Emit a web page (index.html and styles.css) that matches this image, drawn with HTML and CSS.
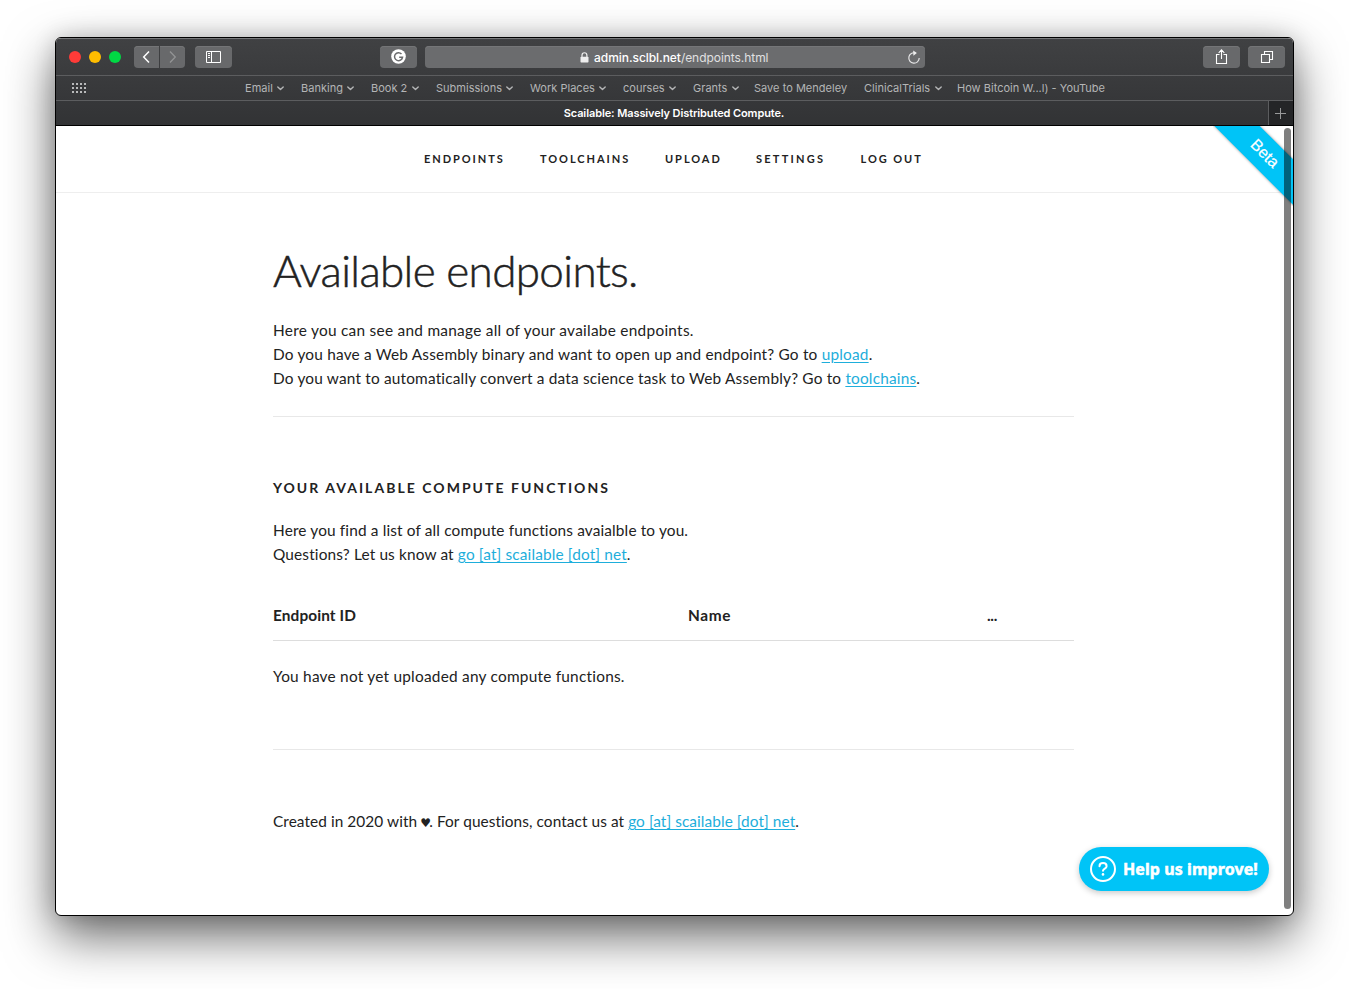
FILE: index.html
```html
<!DOCTYPE html>
<html lang="en">
<head>
<meta charset="utf-8">
<title>Scailable: Massively Distributed Compute.</title>
<link rel="stylesheet" href="styles.css">
</head>
<body>
<svg class="defs" width="0" height="0"><defs><symbol id="chev" viewBox="0 0 7 5"><path d="M.8 1l2.7 2.6L6.2 1" fill="none" stroke="#b4b5b6" stroke-width="1.4" stroke-linecap="round" stroke-linejoin="round"/></symbol></defs></svg>
<div class="window">
  <header class="chrome">
    <div class="toolbar">
      <div class="lights"><i class="red"></i><i class="yellow"></i><i class="green"></i></div>
      <div class="btn back"><svg width="25" height="22" viewBox="0 0 25 22"><path d="M15 5.5L9.700 11l5.300 5.500" fill="none" stroke="#fff" stroke-width="1.500"/></svg></div>
      <div class="btn forward"><svg width="25" height="22" viewBox="0 0 25 22"><path d="M10 5.500l5.300 5.500L10 16.500" fill="none" stroke="#939495" stroke-width="1.300"/></svg></div>
      <div class="btn side"><svg width="37" height="22" viewBox="0 0 37 22"><path d="M11.500 5.500h14v11h-14zM16.500 5.500v11M13 7.500h2M13 9.500h2M13 11.500h2" fill="none" stroke="#fff"/></svg></div>
      <div class="btn gram"><svg width="37" height="22" viewBox="0 0 37 22"><circle cx="18.500" cy="10.500" r="7.300" fill="#fff"/><path d="M21.500 8A4 4 0 1 0 22.500 11.300H19.200" fill="none" stroke="#6a6b6d" stroke-width="1.500"/></svg></div>
      <div class="address">
        <svg class="lock" width="9" height="11" viewBox="0 0 9 11"><path d="M2 5V3.200a2.400 2.400 0 0 1 4.900 0V5" fill="none" stroke="#eee" stroke-width="1.200"/><rect x=".5" y="4.700" width="8" height="5.800" rx=".7" fill="#eee"/></svg>
        <span class="url"><b>admin.sclbl.net</b>/endpoints.html</span>
        <svg class="reload" width="14" height="15" viewBox="0 0 14 15"><path d="M8.500 3A5.200 5.200 0 1 0 12.200 8" fill="none" stroke="#e4e4e5" stroke-width="1.200"/><path d="M6.200 .5L9.900 3.100 6.400 5.700z" fill="#eee"/></svg>
      </div>
      <div class="btn share"><svg width="37" height="22" viewBox="0 0 37 22"><path d="M16.500 8.500h-3v9h10v-9h-3M18.500 13V4M15.700 6.800l2.800-2.900 2.800 2.900" fill="none" stroke="#fff" stroke-width="1.100"/></svg></div>
      <div class="btn tabs"><svg width="37" height="22" viewBox="0 0 37 22"><path d="M13.500 8.500h8v8h-8zM16.500 8V5.500h8v8H22" fill="none" stroke="#fff" stroke-width="1.100"/></svg></div>
    </div>
    <nav class="bookmarks">
      <svg class="dots" width="16" height="10" viewBox="0 0 16 10"><path d="M0 1h15M0 5h15M0 9h15" fill="none" stroke="#b9babb" stroke-width="2" stroke-dasharray="2 2"/></svg>
      <span class="bm w-email">Email<svg width="7" height="5"><use href="#chev"/></svg></span>
      <span class="bm w-banking">Banking<svg width="7" height="5"><use href="#chev"/></svg></span>
      <span class="bm w-book">Book 2<svg width="7" height="5"><use href="#chev"/></svg></span>
      <span class="bm w-sub">Submissions<svg width="7" height="5"><use href="#chev"/></svg></span>
      <span class="bm w-work">Work Places<svg width="7" height="5"><use href="#chev"/></svg></span>
      <span class="bm w-courses">courses<svg width="7" height="5"><use href="#chev"/></svg></span>
      <span class="bm w-grants">Grants<svg width="7" height="5"><use href="#chev"/></svg></span>
      <span class="bm w-save">Save to Mendeley</span>
      <span class="bm w-trials">ClinicalTrials<svg width="7" height="5"><use href="#chev"/></svg></span>
      <span class="bm">How Bitcoin W...l) - YouTube</span>
    </nav>
    <div class="tabbar"><div class="tab">Scailable: Massively Distributed Compute.</div><div class="plus"><svg width="11" height="11" viewBox="0 0 11 11"><path d="M5.500 0v11M0 5.500h11" stroke="#98999a"/></svg></div></div>
  </header>
  <div class="page">
    <nav class="menu">
      <a class="m1">ENDPOINTS</a><a class="m2">TOOLCHAINS</a><a class="m3">UPLOAD</a><a class="m4">SETTINGS</a><a class="m5">LOG OUT</a>
    </nav>
    <main class="content">
      <h1>Available endpoints.</h1>
      <p class="intro"><span class="t1">Here you can see and manage all of your availabe endpoints.</span><br><span class="t2">Do you have a Web Assembly binary and want to open up and endpoint? Go to <a>upload</a>.</span><br><span class="t3">Do you want to automatically convert a data science task to Web Assembly? Go to <a>toolchains</a>.</span></p>
      <hr>
      <h2>YOUR AVAILABLE COMPUTE FUNCTIONS</h2>
      <p class="about"><span class="t4">Here you find a list of all compute functions avaialble to you.</span><br><span class="t5">Questions? Let us know at <a>go [at] scailable [dot] net</a>.</span></p>
      <div class="thead"><span>Endpoint ID</span><span class="name">Name</span><span class="more">...</span></div>
      <p class="empty"><span class="t6">You have not yet uploaded any compute functions.</span></p>
      <hr>
      <p class="foot"><span class="t7">Created in 2020 with <span class="heart">♥</span>. For questions, contact us at <a>go [at] scailable [dot] net</a>.</span></p>
    </main>
    <div class="corner"><div class="ribbon">Beta</div></div>
    <div class="scroll"></div>
    <div class="help"><svg width="26" height="26" viewBox="0 0 26 26"><circle cx="13" cy="13" r="12" fill="none" stroke="#fff" stroke-width="2"/><path d="M9.500 10.200C9.500 6 16.600 6 16.600 10.200C16.600 12.500 13 12.600 13 14.800" fill="none" stroke="#fff" stroke-width="2" stroke-linecap="round"/><circle cx="13" cy="18.400" r="1.300" fill="#fff"/></svg><span>Help us improve!</span></div>
  </div>
</div>
</body>
</html>
```
FILE: styles.css
```css
* { box-sizing: border-box; }
body { margin: 0; height: 989px; padding: 37px 55px; background: #fff; overflow: hidden; }
.defs { position: absolute; }
.window { width: 1239px; height: 879px; border: 1px solid #000; border-radius: 6px; overflow: hidden; background: #fff; box-shadow: 0 20px 50px rgba(0,0,0,.6), 0 0 22px rgba(0,0,0,.16); }
.chrome { height: 88px; background: linear-gradient(#404143, #323335); border-top: 1px solid #77787a; border-bottom: 1px solid #000; font-family: Inter, sans-serif; }
.toolbar { height: 37px; padding: 7px 8px 0 13px; display: flex; border-bottom: 1px solid #5c5d5f; }
.lights { display: flex; gap: 8px; width: 65px; padding-top: 5px; }
.lights i { width: 12px; height: 12px; border-radius: 50%; }
.red { background: #ff3b38; }
.yellow { background: #ffbd00; }
.green { background: #00d944; }
.btn { width: 37px; height: 22px; flex: none; border-radius: 4px; background: #68696b; box-shadow: inset 0 1px #747577; }
.btn svg { display: block; }
.back, .forward { width: 25px; }
.back { margin-right: 1px; border-radius: 4px 0 0 4px; }
.forward { border-radius: 0 4px 4px 0; margin-right: 10px; }
.gram { margin-left: 148px; margin-right: 8px; }
.address { width: 500px; height: 22px; border-radius: 4px; background: #6b6c6e; box-shadow: inset 0 1px #757678; display: flex; align-items: center; padding-left: 155px; color: #e0e0e1; }
.lock { margin-right: 5px; }
.url { width: 300px; font-size: 12px; letter-spacing: -.05px; white-space: nowrap; }
.url b { font-weight: 500; color: #fff; }
.reload { margin-left: 13px; }
.share { margin-left: auto; margin-right: 8px; }
.bookmarks { height: 25px; display: flex; align-items: center; padding-left: 16px; border-bottom: 1px solid #5c5d5f; color: #b4b5b6; font-size: 11px; letter-spacing: .02px; white-space: nowrap; }
.dots { width: 16px; margin-right: 157px; }
.bm { display: flex; align-items: center; justify-content: space-between; margin-right: 17px; flex: none; }
.w-email { width: 39px; } .w-banking { width: 53px; } .w-book { width: 48px; }
.w-sub { width: 77px; } .w-work { width: 76px; } .w-courses { width: 53px; }
.w-grants { width: 46px; margin-right: 15px; } .w-save { width: 93px; }
.w-trials { width: 78px; margin-right: 15px; }
.tabbar { height: 24px; display: flex; }
.tab { flex: 1; text-align: center; font-size: 11px; font-weight: 600; letter-spacing: -.1px; line-height: 24px; color: #fff; padding-left: 24px; }
.plus { width: 25px; border-left: 1px solid #5c5d5f; background: #242527; padding: 7px 0 0 6px; }
.plus svg { display: block; }
.page { position: relative; height: 789px; font-family: Lato, sans-serif; color: #222; overflow: hidden; }
.menu { height: 67px; border-bottom: 1px solid #eee; display: flex; padding: 24px 0 0 368px; font-size: 11px; line-height: 18px; font-weight: 700; letter-spacing: 1.95px; white-space: nowrap; }
.m1 { width: 116px; } .m2 { width: 125px; } .m3 { width: 91px; } .m4 { width: 104.5px; letter-spacing: 2.25px; }
.content { width: 801px; margin-left: 217px; padding-top: 50px; }
h1 { margin: 0; font-size: 44px; line-height: 54px; height: 75px; font-weight: 300; letter-spacing: -.65px; -webkit-text-stroke: .5px #222; white-space: nowrap; }
p { margin: 0; font-size: 15.4px; line-height: 24px; white-space: nowrap; }
.t1 { letter-spacing: .27px; }
.t2 { letter-spacing: .19px; }
.t3 { letter-spacing: .18px; }
.t4 { letter-spacing: .14px; }
.t5 { letter-spacing: .14px; }
.t6 { letter-spacing: .23px; }
.t7 { letter-spacing: .07px; }
.content a { color: #1eaedb; text-decoration: underline; text-underline-offset: 2px; text-decoration-skip-ink: auto; }
hr { margin: 0; border: 0; border-top: 1px solid #e8e8e8; }
.intro { height: 98px; }
h2 { margin: 0; padding-top: 61px; height: 101px; font-size: 14px; line-height: 20px; font-weight: 700; letter-spacing: 2.03px; white-space: nowrap; }
.about { height: 85px; }
.thead { height: 38px; display: grid; grid-template-columns: 415px 299px auto; border-bottom: 1px solid #ddd; font-size: 15.4px; font-weight: 700; line-height: 24px; letter-spacing: .1px; }
.name { letter-spacing: .6px; }
.more { letter-spacing: -.3px; }
.empty { padding-top: 23px; height: 108px; }
.foot { padding-top: 59px; }
.heart { display: inline-block; width: 9px; margin-left: -1px; font-family: "DejaVu Sans", sans-serif; font-size: 12px; line-height: 1; }
.corner { position: absolute; top: 0; right: 0; width: 80px; height: 80px; overflow: hidden; }
.ribbon { position: absolute; left: -14px; top: 11px; width: 130px; height: 32px; padding-left: 2px; transform: rotate(45deg); background: #00c4f7; box-shadow: 0 0 3px rgba(0,0,0,.4); color: #fff; font: 16px/32px "Liberation Sans", sans-serif; text-align: center; -webkit-text-stroke: .2px #fff; }
.scroll { position: absolute; right: 2px; top: 2px; width: 7px; height: 781px; border-radius: 4px; background: rgba(0,0,0,.5); }
.help { position: absolute; right: 24px; bottom: 24px; width: 190px; height: 44px; border-radius: 22px; background: #00c4f7; box-shadow: 0 2px 6px rgba(0,0,0,.22); display: flex; align-items: center; gap: 7px; padding-left: 11px; color: #fff; font: 700 16px/44px "Noto Sans", sans-serif; letter-spacing: .08px; -webkit-text-stroke: .5px #fff; white-space: nowrap; }
.help svg { flex: none; }
```
